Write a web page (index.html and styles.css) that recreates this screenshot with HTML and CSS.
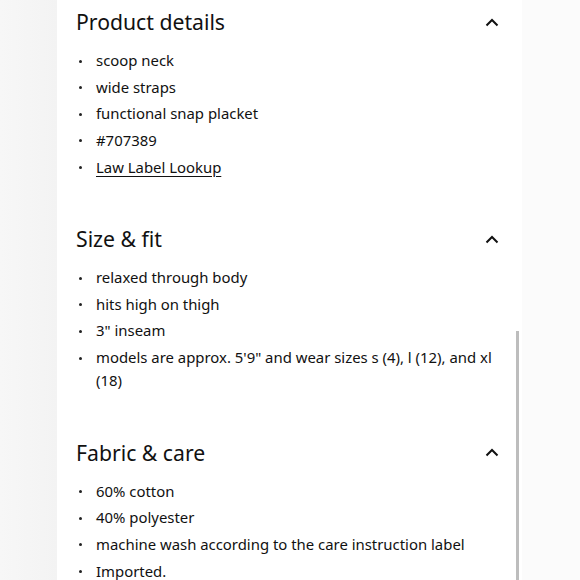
FILE: index.html
```html
<!DOCTYPE html>
<html lang="en">
<head>
<meta charset="utf-8">
<title>Product details</title>
<link rel="stylesheet" href="styles.css">
</head>
<body>
<div class="page">
  <div class="gutter-left"></div>
  <main class="panel">
    <section class="acc">
      <div class="acc-head">
        <h2 class="acc-title">Product details</h2>
        <svg class="chev" width="14" height="9" viewBox="0 0 14 9"><path d="M1.5 7.5 L7 2 L12.5 7.5" fill="none" stroke="#111" stroke-width="2"/></svg>
      </div>
      <ul class="acc-list">
        <li>scoop neck</li>
        <li>wide straps</li>
        <li>functional snap placket</li>
        <li>#707389</li>
        <li><a class="link" href="#">Law Label Lookup</a></li>
      </ul>
    </section>
    <section class="acc">
      <div class="acc-head">
        <h2 class="acc-title">Size &amp; fit</h2>
        <svg class="chev" width="14" height="9" viewBox="0 0 14 9"><path d="M1.5 7.5 L7 2 L12.5 7.5" fill="none" stroke="#111" stroke-width="2"/></svg>
      </div>
      <ul class="acc-list">
        <li>relaxed through body</li>
        <li>hits high on thigh</li>
        <li>3" inseam</li>
        <li>models are approx. 5'9" and wear sizes s (4), l (12), and xl (18)</li>
      </ul>
    </section>
    <section class="acc">
      <div class="acc-head">
        <h2 class="acc-title">Fabric &amp; care</h2>
        <svg class="chev" width="14" height="9" viewBox="0 0 14 9"><path d="M1.5 7.5 L7 2 L12.5 7.5" fill="none" stroke="#111" stroke-width="2"/></svg>
      </div>
      <ul class="acc-list">
        <li>60% cotton</li>
        <li>40% polyester</li>
        <li>machine wash according to the care instruction label</li>
        <li>Imported.</li>
      </ul>
    </section>
    <div class="scrollbar"></div>
  </main>
  <div class="gutter-right"></div>
</div>
</body>
</html>
```
FILE: styles.css
```css
html, body {
  margin: 0;
  padding: 0;
  height: 580px;
  overflow: hidden;
  background: #fafafa;
}
body {
  font-family: "Noto Sans", "DejaVu Sans", sans-serif;
  color: #111;
}
.page {
  display: flex;
  height: 580px;
}
.gutter-left {
  width: 57px;
  flex: none;
  background: linear-gradient(90deg, #f7f7f7, #f3f3f3);
}
.gutter-right {
  flex: 1;
  background: #fbfbfb;
}
.panel {
  position: relative;
  width: 465px;
  flex: none;
  background: #fff;
  padding: 7px 22px 0 19px;
  box-sizing: border-box;
  display: flex;
  flex-direction: column;
  gap: 45.5px;
}
.acc-head {
  display: flex;
  justify-content: space-between;
  align-items: center;
  height: 30px;
}
.acc-title {
  margin: 0;
  font-size: 21.2px;
  font-weight: 400;
  line-height: 30px;
}
.chev {
  margin-right: 1px;
}
.acc-list {
  list-style: none;
  margin: 12px 0 0;
  padding: 0;
  display: flex;
  flex-direction: column;
  gap: 3.67px;
}
.acc-list li {
  position: relative;
  padding-left: 20px;
  font-size: 14.9px;
  line-height: 23px;
}
.acc-list li::before {
  content: "";
  position: absolute;
  left: 3px;
  top: 10.5px;
  width: 3px;
  height: 3px;
  background: #222;
  border-radius: 50%;
}
.link {
  color: inherit;
  text-decoration: underline;
  text-underline-offset: 3px;
}
.scrollbar {
  position: absolute;
  left: 459px;
  top: 331px;
  width: 3px;
  height: 260px;
  background: #bdbdbd;
}
```
